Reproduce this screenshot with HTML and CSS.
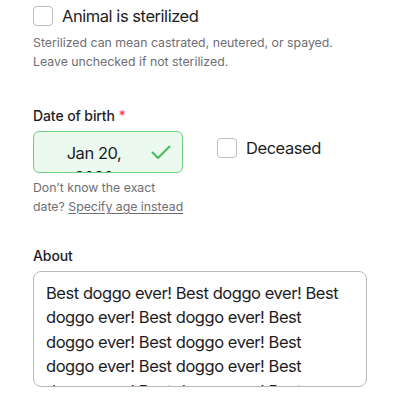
FILE: index.html
```html
<!DOCTYPE html>
<html>
<head>
<meta charset="utf-8">
<link rel="stylesheet" href="styles.css">
</head>
<body>
<div class="form">
  <label class="check-row">
    <span class="box"></span>
    <span class="check-label">Animal is sterilized</span>
  </label>
  <p class="hint hint-steril">Sterilized can mean castrated, neutered, or spayed.<br>Leave unchecked if not sterilized.</p>

  <div class="field-label dob-label">Date of birth <span class="req">*</span></div>
  <div class="dob-row">
    <div class="dob-col">
      <div class="date-input">
        <div class="date-text">Jan 20, 2020</div>
        <svg class="tick" width="20" height="16" viewBox="0 0 20 16"><polyline points="1.5,7.5 7,13 18.5,1.5" fill="none" stroke="#45bb59" stroke-width="2" stroke-linecap="round" stroke-linejoin="round"/></svg>
      </div>
      <p class="hint hint-dob">Don’t know the exact<br>date? <a class="link">Specify age instead</a></p>
    </div>
    <label class="check-row deceased">
      <span class="box"></span>
      <span class="check-label">Deceased</span>
    </label>
  </div>

  <div class="field-label about-label">About</div>
  <div class="textarea">
    <div class="ta-text">Best doggo ever! Best doggo ever! Best doggo ever! Best doggo ever! Best doggo ever! Best doggo ever! Best doggo ever! Best doggo ever! Best doggo ever! Best doggo ever! Best</div>
  </div>
</div>
</body>
</html>
```
FILE: styles.css
```css
html, body {
  margin: 0;
  padding: 0;
  background: #fff;
}
body {
  font-family: Inter, "Noto Sans", sans-serif;
  color: #1d1d1f;
}
.form {
  padding: 6px 33px 0 33px;
  width: 334px;
}
.check-row {
  display: flex;
  align-items: center;
  gap: 9px;
}
.box {
  width: 18px;
  height: 18px;
  border: 1px solid #bdbdc2;
  border-radius: 4px;
  background: #fff;
  flex: none;
}
.check-label {
  font-size: 16.5px;
  line-height: 20px;
  letter-spacing: -0.45px;
}
.hint {
  margin: 0;
  color: #6e6e73;
  font-size: 12.3px;
  line-height: 19px;
}
.hint-steril {
  margin-top: 7px;
}
.field-label {
  font-size: 14px;
  font-weight: 500;
  line-height: 18px;
  letter-spacing: -0.1px;
}
.req {
  color: #f04a4a;
}
.dob-label {
  margin-top: 36px;
}
.dob-row {
  display: flex;
  align-items: flex-start;
  gap: 34px;
  margin-top: 6px;
}
.dob-col {
  width: 150px;
}
.date-input {
  box-sizing: border-box;
  width: 150px;
  height: 42px;
  border: 1px solid #6fcf7f;
  background: #ebf9ee;
  border-radius: 6px;
  overflow: hidden;
  display: flex;
  align-items: flex-start;
  position: relative;
}
.date-text {
  width: 120px;
  padding: 0 30px 0 30px;
  box-sizing: border-box;
  text-align: center;
  font-size: 16.5px;
  line-height: 24px;
  letter-spacing: -0.45px;
  padding-top: 9px;
}
.tick {
  position: absolute;
  right: 11px;
  top: 13px;
}
.hint-dob {
  margin-top: 5px;
  white-space: nowrap;
}
.link {
  color: #6e6e73;
  text-decoration: underline;
  text-underline-offset: 2px;
}
.deceased {
  margin-top: 7px;
}
.about-label {
  margin-top: 31px;
}
.textarea {
  box-sizing: border-box;
  margin-top: 6px;
  width: 334px;
  height: 116px;
  border: 1px solid #b8b8bc;
  border-radius: 8px;
  overflow: hidden;
  padding: 9px 20px 0 12px;
}
.ta-text {
  font-size: 16.5px;
  line-height: 24.4px;
  letter-spacing: -0.45px;
}
```
